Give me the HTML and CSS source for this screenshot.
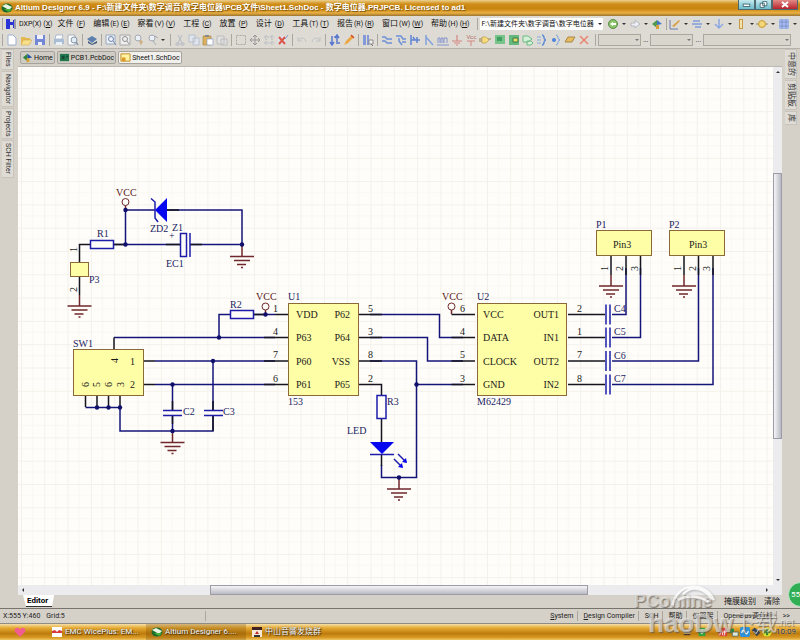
FILE: index.html
```
<!DOCTYPE html>
<html lang="en">
<head>
    <meta charset="UTF-8">
    <title>Altium Designer 6.9</title>
    <link rel="stylesheet" href="styles.css">
</head>
<body>
    <header class="titlebar">
        <svg class="icon" viewBox="0 0 12 12"><ellipse cx="6" cy="6" rx="5.5" ry="4.5" fill="#1d6b2c"/><path d="M1 4l7 4 3-3-6-3z" fill="#e8f3e0"/><path d="M3 7l5 3 3-3z" fill="#46b03c"/></svg>
        <h1>Altium Designer 6.9 - F:\新建文件夹\数字调音\数字电位器\PCB文件\Sheet1.SchDoc - 数字电位器.PRJPCB. Licensed to ad1</h1>
        <div class="win-buttons">
            <button class="win" aria-label="Minimize"><svg viewBox="0 0 18 9"><rect x="5" y="4" width="8" height="3" fill="#fff" stroke="#35606c"/></svg></button>
            <button class="win" aria-label="Restore"><svg viewBox="0 0 18 9"><path d="M8 1h5v5h-5zM5 3h5v5h-5z" fill="#fff" stroke="#35606c"/></svg></button>
            <button class="win close" aria-label="Close"><svg viewBox="0 0 24 9"><path d="M9 2l6 5M15 2l-6 5" stroke="#fff" stroke-width="2"/></svg></button>
        </div>
    </header>

    <nav class="menubar">
        <span class="grip"></span>
        <button class="menu dxp"><svg class="icon" viewBox="0 0 12 12"><path d="M1 1h4v3h3V2h3v8H8V7H5v4H1z" fill="#2a35d8"/><path d="M9 1h2v10H9z" fill="#9a9aa8"/></svg><span>DXP(X) (<u>X</u>)</span></button>
        <button class="menu">文件 <span>(<u>F</u>)</span></button>
        <button class="menu">编辑<span>(E) (<u>E</u>)</span></button>
        <button class="menu">察看<span>(V) (<u>V</u>)</span></button>
        <button class="menu">工程 <span>(<u>C</u>)</span></button>
        <button class="menu">放置 <span>(<u>P</u>)</span></button>
        <button class="menu">设计 <span>(<u>D</u>)</span></button>
        <button class="menu">工具<span>(T) (<u>T</u>)</span></button>
        <button class="menu">报告<span>(R) (<u>R</u>)</span></button>
        <button class="menu">窗口<span>(W) (<u>W</u>)</span></button>
        <button class="menu">帮助<span>(H) (<u>H</u>)</span></button>
        <div class="address">
            <span class="grip"></span>
            <span class="combo path"><select aria-label="Document path"><option>F:\新建文件夹\数字调音\数字电位器</option></select></span>
            <div class="nav-tools">
                <button class="drop" aria-label="Back"><svg class="icon" viewBox="0 0 12 12"><circle cx="6" cy="6" r="4.5" fill="#8cc56a" stroke="#5c8a4a"/><path d="M3 6l3-2v4zM6 5h3v2H6z" fill="#fff"/></svg></button>
                <button class="drop" aria-label="Forward"><svg class="icon" viewBox="0 0 12 12"><path d="M2 5h4V2l5 4-5 4V8H2z" fill="#eceef4" stroke="#b4b8c0"/></svg></button>
                <button aria-label="Home"><svg class="icon" viewBox="0 0 12 12"><path d="M1 6l5-4v8z" fill="#4f9a4c"/><path d="M11 6L6 2v5z" fill="#4274c4"/><path d="M5 7h3v4H5z" fill="#d8a23a"/></svg></button>
                <span class="grip"></span>
                <button class="drop" aria-label="Drawing tools"><svg class="icon" viewBox="0 0 12 12"><path d="M1 2v9h8" stroke="#6a7cae" fill="none"/><path d="M3 8l7-6 1 1-6 6z" fill="#d6a044"/></svg></button>
                <button class="drop" aria-label="Align"><svg class="icon" viewBox="0 0 12 12"><path d="M2 3h7M1 6h10M4 9h6" stroke="#7f9ddc" stroke-width="1.5"/></svg></button>
                <button class="drop" aria-label="Power"><svg class="icon" viewBox="0 0 12 12"><path d="M6 1v9M2 6l4 4 4-4" stroke="#8ba8e2" stroke-width="1.5" fill="none"/></svg></button>
                <button class="drop" aria-label="Digital"><svg class="icon" viewBox="0 0 12 12"><rect x="4.500" y="1.500" width="3" height="9" fill="#f4e3b0" stroke="#c49a45"/></svg></button>
                <button class="drop" aria-label="Sources"><svg class="icon" viewBox="0 0 12 12"><path d="M0 6h12" stroke="#9c8855"/><circle cx="6" cy="6" r="3.500" fill="#f5d675" stroke="#c49a35"/></svg></button>
                <button class="drop" aria-label="Grids"><svg class="icon" viewBox="0 0 12 12"><path d="M1 1h10v10H1z" fill="#a9bbea"/><path d="M1 4h10M1 8h10M4 1v10M8 1v10" stroke="#7c94d4"/></svg></button>
            </div>
        </div>
    </nav>

    <div class="toolbar">
        <div class="group first">
            <button aria-label="New"><svg class="icon" viewBox="0 0 12 12"><path d="M2 1h5l3 3v7H2z" fill="#fff" stroke="#9eafd0"/></svg></button>
            <button aria-label="Open"><svg class="icon" viewBox="0 0 12 12"><path d="M1 3h4l1 1h4v6H1z" fill="#e6b952"/><path d="M3 6h9l-3 5H1z" fill="#f8df8a" stroke="#c89f40" stroke-width=".5"/></svg></button>
            <button aria-label="Save"><svg class="icon" viewBox="0 0 12 12"><path d="M1 1h10v10H1z" fill="#7287d6"/><path d="M3 1h6v4H3zM4 8h4v3H4z" fill="#eef1fc"/></svg></button>
        </div>
        <div class="group">
            <button aria-label="Print"><svg class="icon" viewBox="0 0 12 12"><path d="M3 1h7L9 5H2z" fill="#fff" stroke="#8fa6c4" stroke-width=".7"/><path d="M1 5h10v5H1z" fill="#a9bdd4"/><path d="M3 8h6v3H3z" fill="#e9f0f7"/></svg></button>
            <button aria-label="Preview"><svg class="icon" viewBox="0 0 12 12"><path d="M1 1h7v10H1z" fill="#fff" stroke="#a8b0bc"/><circle cx="7" cy="6" r="3" fill="#e0ecf4" stroke="#8896a8"/><path d="M9 8l2 3" stroke="#8896a8" stroke-width="1.500"/></svg></button>
        </div>
        <div class="group">
            <button aria-label="Devices"><svg class="icon" viewBox="0 0 12 12"><path d="M1 5l5-3 5 3-5 4z" fill="#5c7fae"/><path d="M2 7l4 3 5-3v2l-5 2-4-2z" fill="#3a5578"/></svg></button>
        </div>
        <div class="group">
            <button aria-label="Fit document"><svg class="icon" viewBox="0 0 12 12"><path d="M1 1h9v9H1z" fill="#eef1f6" stroke="#98a8c0"/><circle cx="6" cy="5" r="2.500" fill="none" stroke="#7087ae"/><path d="M8 7l3 4" stroke="#7087ae"/></svg></button>
            <button aria-label="Fit area"><svg class="icon" viewBox="0 0 12 12"><path d="M1 1h10v10H1z" fill="#eee" stroke="#a8a8a8"/><circle cx="6" cy="5" r="2.500" fill="none" stroke="#909090"/><path d="M8 7l2 3" stroke="#909090"/></svg></button>
            <button aria-label="Zoom selected"><svg class="icon" viewBox="0 0 12 12"><circle cx="5" cy="4" r="3" fill="#eaf0f6" stroke="#a4a8b2"/><path d="M6 8h4M8 6v5" stroke="#c8a06a"/></svg></button>
            <button class="drop" aria-label="Zoom last"><svg class="icon" viewBox="0 0 12 12"><circle cx="5" cy="4" r="3" fill="#eaf0f6" stroke="#a4a8b2"/><path d="M6 7l3 4M8 2l3 2" stroke="#a4a8b2"/></svg></button>
        </div>
        <div class="group">
            <button disabled aria-label="Cut"><svg class="icon" viewBox="0 0 12 12"><path d="M4 1l4 8M8 1L4 9" stroke="#b6bac4"/><path d="M2 9h3v2H2zM7 9h3v2H7z" fill="none" stroke="#b6bac4"/></svg></button>
            <button disabled aria-label="Copy"><svg class="icon" viewBox="0 0 12 12"><path d="M1 1h6v7H1zM5 4h6v7H5z" fill="#e2e6ee" stroke="#b8c0cc"/></svg></button>
            <button aria-label="Paste"><svg class="icon" viewBox="0 0 12 12"><path d="M1 2h8v9H1z" fill="#ddb15a" stroke="#a08040" stroke-width=".6"/><path d="M3 1h4v2H3z" fill="#8a8a8a"/><path d="M5 5h6v6H5z" fill="#fff" stroke="#8fa2ca" stroke-width=".7"/></svg></button>
            <button disabled aria-label="Stamp"><svg class="icon" viewBox="0 0 12 12"><path d="M1 2h7v8H1zM5 5h6v6H5z" fill="#e1e1e1" stroke="#bcbcbc"/></svg></button>
        </div>
        <div class="group">
            <button aria-label="Select area"><svg class="icon" viewBox="0 0 12 12"><path d="M1.500 1.500h9v9h-9z" fill="none" stroke="#a8a8a8" stroke-dasharray="2 1"/></svg></button>
            <button aria-label="Move"><svg class="icon" viewBox="0 0 12 12"><path d="M6 1v10M1 6h10M4 3l2-2 2 2M4 9l2 2 2-2M3 4L1 6l2 2M9 4l2 2-2 2" stroke="#999" fill="none"/></svg></button>
            <button aria-label="Deselect"><svg class="icon" viewBox="0 0 12 12"><path d="M1 3h10M1 9h10M3 1v10M9 1v10" stroke="#b4b8c0" stroke-dasharray="2 1"/></svg></button>
            <button aria-label="Clear"><svg class="icon" viewBox="0 0 12 12"><path d="M1 2h8v8H1z" fill="#dfe2ea"/><path d="M2 3l6 7M8 3l-6 7" stroke="#db5548" stroke-width="2"/><path d="M8 5l3-4" stroke="#8897bd"/></svg></button>
        </div>
        <div class="group">
            <button disabled aria-label="Undo"><svg class="icon" viewBox="0 0 12 12"><path d="M2 3v4h4M2 7c2-4 7-4 8 1" fill="none" stroke="#c0c2c6"/></svg></button>
            <button disabled aria-label="Redo"><svg class="icon" viewBox="0 0 12 12"><path d="M10 3v4H6M10 7C8 3 3 3 2 8" fill="none" stroke="#c0c2c6"/></svg></button>
        </div>
        <div class="group">
            <button aria-label="Hierarchy"><svg class="icon" viewBox="0 0 12 12"><path d="M3 2v8M1 8l2 3 2-3M8 10V2M6 4l2-3 2 3M5 3h2M9 9h2" stroke="#5978cf" stroke-width="1.500" fill="none"/></svg></button>
            <button aria-label="Cross probe"><svg class="icon" viewBox="0 0 12 12"><path d="M1 11l2-4 6-6 2 2-6 6z" fill="#eea640"/><path d="M8 1l3 3" stroke="#d05030" stroke-width="1.500"/></svg></button>
        </div>
        <div class="group">
            <button aria-label="Browse library"><svg class="icon" viewBox="0 0 12 12"><path d="M1 1h3v10H1zM5 1h2v10H5z" fill="#8399d8"/><path d="M7 6h4v4H7z" fill="#f0f0f0" stroke="#8d8d8d"/><path d="M9 10l2 2" stroke="#777"/></svg></button>
        </div>
        <div class="group wiring">
            <button aria-label="Wire"><svg class="icon" viewBox="0 0 12 12"><path d="M1 3h3l2 2h5M1 7h3l2 2h5" stroke="#6d91d8" stroke-width="1.500" fill="none"/></svg></button>
            <button aria-label="Bus"><svg class="icon" viewBox="0 0 12 12"><path d="M1 2h5l2 3h3M4 4v3l3 4M7 8h4" stroke="#6d91d8" stroke-width="1.500" fill="none"/></svg></button>
            <button aria-label="Harness"><svg class="icon" viewBox="0 0 12 12"><path d="M2 1v10M2 6h9M4 3l2 3M8 3v6" stroke="#5f84d4" stroke-width="1.500" fill="none"/></svg></button>
            <button aria-label="Bus entry"><svg class="icon" viewBox="0 0 12 12"><path d="M3 1v10M3 3l7 8" stroke="#84a2dc" stroke-width="1.500"/></svg></button>
            <button aria-label="Net label"><svg class="icon" viewBox="0 0 12 12"><path d="M1 9V4h2v5M4 9V4h2v5M7 9V4h3v5M0 11h12" stroke="#8795cf" fill="none"/></svg></button>
            <button aria-label="GND"><svg class="icon" viewBox="0 0 12 12"><path d="M6 1v6M1 7h10M3 9h6M5 11h2" stroke="#d58580" stroke-width="1.200"/></svg></button>
            <button class="vcc" aria-label="VCC"><span>Vcc</span><svg viewBox="0 0 12 6"><path d="M2 1h8M6 1v5" stroke="#d58580"/></svg></button>
            <button aria-label="Part"><svg class="icon" viewBox="0 0 12 12"><path d="M0 5h12M0 7h3" stroke="#97834e"/><path d="M3 3h4l3 3-3 3H3z" fill="#f6dc7d" stroke="#bd994d" stroke-width=".7"/></svg></button>
            <button aria-label="Sheet symbol"><svg class="icon" viewBox="0 0 12 12"><path d="M1 1h10v9H1z" fill="#78c38a"/><path d="M3 3h5v4H3z" fill="#3f9e62"/></svg></button>
            <button aria-label="Sheet entry"><svg class="icon" viewBox="0 0 12 12"><path d="M1 1h10v10H1z" fill="#66b97c"/><path d="M5 4h5v4H5z" fill="#e9dd65" stroke="#39794a"/></svg></button>
            <button aria-label="Device sheet"><svg class="icon" viewBox="0 0 12 12"><path d="M1 2h5l4 3-4 3H1zM5 7h4l2 2-2 2H5z" fill="#d5f0da" stroke="#6dbb80"/></svg></button>
            <button aria-label="Harness connector"><svg class="icon" viewBox="0 0 12 12"><path d="M6 1c3 0 1 5 4 5-3 0-1 5-4 5" stroke="#628fd8" stroke-width="1.500" fill="none"/><path d="M1 3h4M1 6h4M1 9h4" stroke="#86aee2"/></svg></button>
            <button aria-label="Harness entry"><svg class="icon" viewBox="0 0 12 12"><path d="M6 1c3 0 1 5 4 5-3 0-1 5-4 5" stroke="#74a2dc" fill="none"/><circle cx="4" cy="6" r="2" fill="#4c83dc"/></svg></button>
            <button aria-label="Port"><svg class="icon" viewBox="0 0 12 12"><path d="M1 8l3-5h7l-3 5z" fill="#e8bc60" stroke="#a98848"/></svg></button>
            <button aria-label="No ERC"><svg class="icon" viewBox="0 0 12 12"><path d="M2 2l8 8M10 2l-8 8" stroke="#ec8070" stroke-width="1.500"/></svg></button>
        </div>
        <div class="group filters">
            <span class="combo"><select aria-label="Grid filter"></select></span>...
            <span class="combo"><select aria-label="Net filter"></select></span>...
            <span class="combo wide"><select aria-label="Mask filter"></select></span>
        </div>
    </div>

    <div class="workspace">
        <aside class="side left">
            <button>Files</button>
            <button>Navigator</button>
            <button>Projects</button>
            <button>SCH Filter</button>
        </aside>

        <div class="center">
            <div class="doc-tabs">
                <button><svg class="icon" viewBox="0 0 12 12"><path d="M1 6l5-4v8z" fill="#2d8338"/><path d="M11 6L6 2v5z" fill="#214fae"/><path d="M5 7h3v4H5z" fill="#d8a32a"/></svg>Home</button>
                <button><svg class="icon" viewBox="0 0 12 12"><path d="M1 2h10v8H1z" fill="#22784c"/><path d="M3 4h3v4H3zM8 4h2v2H8z" fill="#134a36"/></svg>PCB1.PcbDoc</button>
                <button class="active"><svg class="icon" viewBox="0 0 12 12"><path d="M1 2h10v8H1z" fill="#fff2a0" stroke="#bd8922"/><path d="M2 6h4v4H2z" fill="#db9a25"/></svg>Sheet1.SchDoc</button>
            </div>

            <div class="sheet">
                <svg class="schematic">
                    <defs>
                        <pattern id="grid" width="23.300" height="23.300" patternUnits="userSpaceOnUse" x="21" y="18">
                            <path d="M11.500 0v23.300M0 11.500h23.300" stroke="#f9f7f2" fill="none"/>
                            <path d="M.500 0v23.300M0 .500h23.300" stroke="#f3f1ea" fill="none"/>
                        </pattern>
                        <g id="gnd">
                            <path d="M0-11V0M-12 0h24M-8 4h16M-5 8h9M-1 11h2"/>
                        </g>
                        <g id="cap"><path d="M-2-10v20M2-10v20"/></g>
                    </defs>
                    <!-- sheet origin -->
                    <g transform="translate(-18 -67)">
                        <rect width="1600" height="1200" fill="url(#grid)"/>

                        <g class="wire">
                            <path d="M125.500 210V244.500M125.500 210H155M167 210H242V245M113 244.500H180M190 244.500H242"/>
                            <path d="M219 337.500V314.500H230M253 314.500H275M114 337.500H275M155 361H275M155 384.500H275"/>
                            <path d="M213 361V410M213 416V431H120V407.500H85.500M172.500 384.500V410M172.500 416V431"/>
                            <path d="M370 314.500H439.500V337.500H463M370 337.500H427.500V361H463M370 361H416.500V477.500H381.500V465M416.500 384.500H463"/>
                            <path d="M612 314.500H626V268M612 337.500H640.500V268M612 361H698.500V268M612 384.500H713V268"/>
                        </g>
                        <g class="pin">
                            <path d="M90 244.500H79.500V262M79.500 276V295M113 244.500H125M167 210H179M166 244.500H180M190 244.500H202"/>
                            <path d="M275 314.500H288M253 314.500H265M264 337.500H288M264 361H288M264 384.500H288M114 350V337.500M143.500 361H155M143.500 384.500H155"/>
                            <path d="M85.500 395.500V407M97 395.500V407M108.500 395.500V407M120 395.500V407M172.500 401V410M213 401V410M172.500 416V424M213 416V431"/>
                            <path d="M358 314.500H382M358 337.500H382M358 361H382M358 384.500H381.500V395M381.500 418V442M381.500 454V466"/>
                            <path d="M451.500 314.500H475M451.500 337.500H475M451.500 361H475M451.500 384.500H475"/>
                            <path d="M568 314.500H605M568 337.500H605M568 361H605M568 384.500H605"/>
                            <path d="M611 256V275M626 256V275M640.500 256V275M684 256V275M698.500 256V275M713 256V275"/>
                        </g>

                        <g class="part">
                            <rect x="90.500" y="240.500" width="23" height="8"/>
                            <rect x="180.500" y="233.500" width="6" height="23"/>
                            <path d="M190 233V257"/>
                            <rect x="230.500" y="310.500" width="23" height="8"/>
                            <rect x="377" y="395.500" width="9" height="23"/>
                            <path d="M163 410.500H182M163 415.500H182M204 410.500H223M204 415.500H223"/>
                            <path d="M151 198.500L155 202V218L158 222"/>
                            <path d="M370 454.500H394M398 454L406 462M394 459L402 467"/>
                            <use href="#cap" x="608" y="314.500"/>
                            <use href="#cap" x="608" y="337.500"/>
                            <use href="#cap" x="608" y="361"/>
                            <use href="#cap" x="608" y="384.500"/>
                        </g>
                        <g class="solid">
                            <path d="M155 210L167 198V222zM370 442H394L382 454zM407 463l-1-5-4 4zM403 468l-1-5-4 4z"/>
                        </g>

                        <g class="power">
                            <use href="#gnd" x="242" y="256.500"/>
                            <use href="#gnd" x="79.500" y="306"/>
                            <use href="#gnd" x="172.500" y="442.500"/>
                            <use href="#gnd" x="399" y="489"/>
                            <use href="#gnd" x="611" y="286"/>
                            <use href="#gnd" x="684" y="286"/>
                            <path d="M125.500 205V210M265.500 310V314M451.500 310V314"/>
                            <circle cx="125.500" cy="202" r="3.500"/>
                            <circle cx="265.500" cy="306.500" r="3.500"/>
                            <circle cx="451.500" cy="306.500" r="3.500"/>
                        </g>

                        <g class="body">
                            <rect x="70.500" y="262.500" width="18" height="14"/>
                            <rect x="73.500" y="349.500" width="70" height="46"/>
                            <rect x="288.500" y="303.500" width="70" height="92"/>
                            <rect x="477.500" y="303.500" width="89" height="92"/>
                            <rect x="596.500" y="230.500" width="55" height="25"/>
                            <rect x="669.500" y="230.500" width="55" height="25"/>
                        </g>

                        <g class="node">
                            <circle cx="125.500" cy="210" r="2.200"/><circle cx="125.500" cy="244.500" r="2.200"/>
                            <circle cx="242" cy="244.500" r="2.200"/><circle cx="265.500" cy="314.500" r="2.200"/>
                            <circle cx="219" cy="337.500" r="2.200"/><circle cx="213" cy="361" r="2.200"/>
                            <circle cx="172.500" cy="384.500" r="2.200"/><circle cx="172.500" cy="431" r="2.200"/>
                            <circle cx="97" cy="407.500" r="2.200"/><circle cx="108.500" cy="407.500" r="2.200"/>
                            <circle cx="120" cy="407.500" r="2.200"/><circle cx="416.500" cy="384.500" r="2.200"/>
                            <circle cx="399" cy="477.500" r="2.200"/>
                        </g>

                        <g class="label">
                            <text x="97" y="237">R1</text><text x="150" y="232">ZD2</text><text x="172" y="231">Z1</text>
                            <text x="169" y="239">+</text><text x="166" y="267">EC1</text><text x="89" y="283">P3</text>
                            <text x="230" y="308">R2</text><text x="288" y="300">U1</text><text x="288" y="405">153</text>
                            <text x="73" y="347">SW1</text><text x="183" y="415">C2</text><text x="223" y="415">C3</text>
                            <text x="387" y="405">R3</text><text x="347" y="434">LED</text>
                            <text x="477" y="300">U2</text><text x="477" y="405">M62429</text>
                            <text x="614" y="312">C4</text><text x="614" y="335">C5</text><text x="614" y="359">C6</text><text x="614" y="382">C7</text>
                            <text x="596" y="228">P1</text><text x="669" y="228">P2</text>
                        </g>
                        <g class="label vcc-label">
                            <text x="116" y="196">VCC</text><text x="256" y="300">VCC</text><text x="442" y="300">VCC</text>
                        </g>
                        <g class="pin-text">
                            <text x="296" y="318">VDD</text><text x="296" y="341">P63</text><text x="296" y="365">P60</text><text x="296" y="388">P61</text>
                            <text x="483" y="318">VCC</text><text x="483" y="341">DATA</text><text x="483" y="365">CLOCK</text><text x="483" y="388">GND</text>
                            <text x="273" y="312">1</text><text x="273" y="335">4</text><text x="273" y="358">7</text><text x="273" y="382">6</text>
                            <text x="368" y="312">5</text><text x="368" y="335">3</text><text x="368" y="358">8</text><text x="368" y="382">2</text>
                            <text x="460" y="312">6</text><text x="460" y="335">4</text><text x="460" y="358">5</text><text x="460" y="382">3</text>
                            <text x="577" y="312">2</text><text x="577" y="335">1</text><text x="577" y="358">7</text><text x="577" y="382">8</text>
                            <text x="130" y="365">1</text><text x="130" y="388">2</text>
                            <text x="613" y="248">Pin3</text><text x="689" y="248">Pin3</text>
                        </g>
                        <g class="pin-text end">
                            <text x="350" y="318">P62</text><text x="350" y="341">P64</text><text x="350" y="365">VSS</text><text x="350" y="388">P65</text>
                            <text x="559" y="318">OUT1</text><text x="559" y="341">IN1</text><text x="559" y="365">OUT2</text><text x="559" y="388">IN2</text>
                        </g>
                        <g class="pin-text">
                            <text transform="translate(77 252) rotate(-90)">1</text>
                            <text transform="translate(77 292) rotate(-90)">2</text>
                            <text transform="translate(118 363) rotate(-90)">4</text>
                            <text transform="translate(89 387) rotate(-90)">6</text>
                            <text transform="translate(100 387) rotate(-90)">5</text>
                            <text transform="translate(112 387) rotate(-90)">6</text>
                            <text transform="translate(124 387) rotate(-90)">3</text>
                            <text transform="translate(608 271) rotate(-90)">1</text>
                            <text transform="translate(623 271) rotate(-90)">2</text>
                            <text transform="translate(638 271) rotate(-90)">3</text>
                            <text transform="translate(681 271) rotate(-90)">1</text>
                            <text transform="translate(696 271) rotate(-90)">2</text>
                            <text transform="translate(710 271) rotate(-90)">3</text>
                        </g>
                    </g>
                </svg>
                <div class="vscroll">
                    <i class="arrow up"></i>
                    <span class="before"></span><span class="thumb"></span><span class="after"></span>
                    <i class="arrow down"></i>
                </div>
            </div>
            <div class="hscroll">
                <i class="arrow prev"></i>
                <span class="before"></span><span class="thumb"></span><span class="after"></span>
                <i class="arrow next"></i>
            </div>
            <div class="editor-bar">
                <button class="editor-tab">Editor</button>
                <button class="mask">掩膜级别</button>
                <button>清除</button>
            </div>
        </div>

        <aside class="side right">
            <button>中意的</button>
            <button>剪贴板</button>
            <button>库</button>
        </aside>
    </div>

    <footer class="status">
        <span class="coords">X:555 Y:460</span>
        <span class="snap">Grid:5</span>
        <span class="message"></span>
        <button><u>S</u>ystem</button>
        <button><u>D</u>esign Compiler</button>
        <button>SCH</button>
        <button>帮助</button>
        <button>仪器架</button>
        <button>OpenBus调色板</button>
        <button>&gt;&gt;</button>
    </footer>

    <div class="taskbar">
        <svg class="icon heart" viewBox="0 0 12 12"><path d="M6 11L1 6c-2-4 4-6 5-2 1-4 7-2 5 2z" fill="#f25d90"/></svg>
        <button><svg class="icon" viewBox="0 0 12 12"><path d="M1 1h10v10H1z" fill="#fff"/><path d="M1 5l3-1 2 2 2-2 3 1v2H1z" fill="#d8383c"/></svg>EMC WicePlus: EM...</button>
        <button class="active"><svg class="icon" viewBox="0 0 12 12"><ellipse cx="6" cy="6" rx="5.500" ry="4.500" fill="#1d6b2c"/><path d="M1 4l7 4 3-3-6-3z" fill="#e8f3e0"/><path d="M3 7l5 3 3-3z" fill="#46b03c"/></svg>Altium Designer 6....</button>
        <button><svg class="icon" viewBox="0 0 12 12"><path d="M1 1h10v10H1z" fill="#f6ead6"/><path d="M1 1h10v3H1z" fill="#402020"/><path d="M4 8l2-3 2 3z" fill="#c22828"/><path d="M3 9h6v2H3z" fill="#333"/></svg>中山音響发烧群</button>
        <div class="tray">
            <svg class="icon" viewBox="0 0 12 12"><path d="M2 3h8M2 6h8M2 9h8" stroke="#4b3a2b" stroke-width="2"/><path d="M2 4h8M2 7h8" stroke="#fff"/></svg>
            <svg class="icon shield" viewBox="0 0 12 12"><path d="M2 1h8v10H2z" fill="#35a33c"/><path d="M6 3v5M4 6l2 2 2-2" stroke="#fff" fill="none"/></svg>
            <svg class="icon" viewBox="0 0 12 12"><path d="M1 1h10v10H1z" fill="#d44437"/><path d="M2 10l2-7 2 7M8 4v6M6 6h4" stroke="#fff" fill="none"/></svg>
            <svg class="icon" viewBox="0 0 12 12"><path d="M1 2h5v5H1z" fill="#2c8a44"/><path d="M4 6h7v5H4z" fill="#dfe8df" stroke="#536753"/></svg>
            <svg class="icon" viewBox="0 0 12 12"><rect width="12" height="12" rx="2" fill="#2d92d8"/><path d="M2 7c1-4 3-4 4-1s3 3 4-1" stroke="#fff" stroke-width="1.500" fill="none"/></svg>
            <svg class="icon" viewBox="0 0 12 12"><path d="M1 4l3-3 4 2 3 4-4 4z" fill="#37424e"/><path d="M3 5l3 3 4-6" stroke="#eee" fill="none"/></svg>
            <svg class="icon" viewBox="0 0 12 12"><circle cx="6" cy="6" r="5.500" fill="#d6e52c"/><path d="M6 2v8M2 6h8" stroke="#27742d" stroke-width="2"/></svg>
            <time>10:09</time>
        </div>
    </div>

    <div class="ball">55</div>

    <div class="watermark">
        <svg viewBox="0 0 70 50"><path d="M10 30A25 25 0 0 1 58 24M22 17c12-12 26-6 34 6M16 24c10-6 24-6 36 2" fill="none" stroke="#fff" stroke-width="3"/></svg>
        <div class="brand">PConline</div>
        <div class="site"><b>haoDw</b><span>下载</span><small>.net</small></div>
    </div>
</body>
</html>
```
FILE: styles.css
```
* { box-sizing: border-box; }
body {
    margin: 0;
    height: 100vh;
    display: flex;
    flex-direction: column;
    overflow: hidden;
    position: relative;
    background: #d5d1c9;
    color: #222;
    font: 7px/10px Roboto, "Noto Sans CJK SC", sans-serif;
}
button {
    display: flex;
    align-items: center;
    padding: 0;
    border: 0;
    background: none;
    color: inherit;
    font: inherit;
    white-space: nowrap;
}
.icon { width: 12px; height: 12px; flex: none; display: block; }
.grip { width: 1px; height: 12px; background: #a9a69f; flex: none; }

/* title bar */
.titlebar {
    height: 16px;
    flex: none;
    display: flex;
    align-items: center;
    padding-left: 1px;
    gap: 2px;
    background: linear-gradient(#ecd08d, #cf8d17 25%, #c8850f 55%, #eab041 80%, #9a7431);
}
.titlebar h1 {
    flex: 1;
    margin: 0;
    color: #fff;
    font: bold 8px/14px "Liberation Sans", "Noto Sans CJK SC", sans-serif;
    white-space: nowrap;
    text-shadow: 1px 1px 1px #7a5410;
}
.win-buttons { display: flex; align-self: flex-start; padding-right: 2px; }
.win {
    width: 17px;
    height: 10px;
    border: 1px solid #4e6a70;
    border-top: 0;
    background: linear-gradient(#c5e9ee, #6fbccb);
}
.win svg { width: 100%; height: 9px; }
.win.close { width: 26px; background: linear-gradient(#e28a86, #b8232b); }

/* menus */
.menubar {
    height: 16px;
    flex: none;
    display: flex;
    align-items: center;
    padding-left: 2px;
    gap: 8px;
    background: #dedbd5;
    color: #111;
    font-size: 8px;
}
.menubar .grip { margin-right: -6px; }
.menu span { font-size: 7px; margin-left: 1px; white-space: pre; }
.menu { white-space: pre; }
.menu.dxp { margin-right: -3px; }
.menu.dxp span { margin-left: 2px; }
.address { display: flex; align-items: center; flex: 1; gap: 2px; }
.address .grip { margin-right: 0; }
.combo { position: relative; display: flex; width: 43px; height: 12px; }
.combo select {
    width: 100%;
    padding: 0 8px 0 1px;
    border: 1px solid #aaa79f;
    border-radius: 0;
    background: #d9d6ce;
    appearance: none;
    font: inherit;
    color: #111;
}
.combo::after, .drop::after {
    content: "";
    border: 2px solid transparent;
    border-top-color: #333;
    border-bottom: 0;
}
.combo::after { position: absolute; right: 2px; top: 5px; border-top-color: #777; }
.combo.path { width: 123px; font-size: 7px; }
.combo.path select { padding: 0; background: #fff; border-color: #fff; }
.combo.path::after { right: 1px; border-top-color: #222; }
.nav-tools { flex: 1; display: flex; justify-content: space-between; padding: 0 3px 0 2px; }
.nav-tools .drop { gap: 3px; }

/* tool buttons */
.toolbar {
    height: 17px;
    flex: none;
    display: flex;
    align-items: center;
    padding-left: 2px;
    background: #dedbd5;
    border-bottom: 1px solid #b5b2ab;
}
.group {
    display: flex;
    align-items: center;
    gap: 2px;
    height: 12px;
    margin-left: 3px;
    padding-left: 3px;
    border-left: 1px solid #a9a69f;
}
.group.first { margin-left: 0; }
.group .drop { gap: 2px; margin-right: 2px; }
.wiring { flex: 1; justify-content: space-between; gap: 0; margin-right: 2px; }
.vcc { flex-direction: column; width: 12px; height: 12px; color: #b36b65; font-size: 6px; line-height: 6px; }
.vcc svg { width: 12px; height: 6px; }
.filters { flex: none; gap: 2px; padding-left: 2px; margin-right: 9px; }
.combo.wide { width: 88px; }

/* work area */
.workspace { flex: 1; min-height: 0; display: flex; }
.side {
    width: 18px;
    flex: none;
    display: flex;
    flex-direction: column;
    align-items: flex-start;
    gap: 1px;
    padding: 0 2px;
}
.side button {
    writing-mode: vertical-rl;
    text-orientation: sideways;
    width: 12px;
    padding: 2px 0;
    justify-content: center;
    background: #dfdcd6;
    border: 1px solid #c8c4bc;
    border-left: 0;
    color: #333;
}
.side.right { padding-left: 3px; font-size: 8px; }
.center { flex: 1; min-width: 0; display: flex; flex-direction: column; }
.doc-tabs { flex: none; display: flex; gap: 2px; padding: 2px 2px 2px; border-bottom: 1px solid #bbb8b1; }
.doc-tabs button {
    height: 13px;
    gap: 1px;
    padding: 0 1px;
    border: 1px solid #a6a39c;
    border-radius: 2px;
    background: #cfccc5;
    color: #111;
}
.doc-tabs .icon { width: 11px; height: 11px; }
.doc-tabs .active { background: #f2f0ec; }

.sheet { flex: 1; min-height: 0; display: flex; background: #fefdf9; }
.schematic { flex: 1; min-width: 0; height: 100%; display: block; }
.schematic text { font: 10px "Liberation Serif", serif; }
.wire { fill: none; stroke: #14147a; stroke-width: 1.5px; }
.pin { fill: none; stroke: #15151f; stroke-width: 1.5px; }
.part { fill: none; stroke: #1d1daa; stroke-width: 1.5px; }
.part rect { fill: #fefdf9; }
.solid { fill: #0707ef; }
.power { fill: none; stroke: #70282c; stroke-width: 1.5px; }
.power circle { fill: #fefdf9; stroke-width: 1px; }
.body { fill: #fefea6; stroke: #8a6a38; }
.node { fill: #10106c; }
.label { fill: #1c1c62; }
.vcc-label { fill: #5b2020; }
.pin-text { fill: #1a1a1a; }
.end { text-anchor: end; }

/* scroll bars */
.vscroll, .hscroll { display: flex; background: #ecebee; }
.vscroll { width: 9px; flex: none; flex-direction: column; align-items: center; padding: 4px 0; }
.hscroll { height: 10px; flex: none; align-items: center; padding: 0 14px 0 4px; }
.thumb { border: 1px solid #9c9ca6; }
.vscroll .thumb { width: 9px; flex: 263; background: linear-gradient(90deg, #f5f5f8, #b9bac4); }
.hscroll .thumb { height: 10px; flex: 375; background: linear-gradient(#f5f5f8, #b9bac4); }
.vscroll .before { flex: 99; }
.vscroll .after { flex: 139; }
.hscroll .before { flex: 186; }
.hscroll .after { flex: 178; }
.arrow { border: 2px solid transparent; }
.up { border-bottom-color: #333; border-top: 0; }
.down { border-top-color: #333; border-bottom: 0; }
.prev { border-right-color: #333; border-left: 0; }
.next { border-left-color: #333; border-right: 0; }

.editor-bar { height: 13px; flex: none; display: flex; gap: 8px; padding: 0 2px 0 5px; font-size: 8px; }
.editor-tab {
    height: 12px;
    padding: 0 6px 0 4px;
    background: #fff;
    border-bottom: 1px solid #333;
    clip-path: polygon(0 0, 100% 0, 29px 100%, 3px 100%);
    color: #000;
    font-weight: bold;
}
.mask { margin-left: auto; }

/* status line */
.status {
    height: 16px;
    flex: none;
    display: flex;
    align-items: center;
    gap: 6px;
    padding: 0 10px 0 3px;
    border-top: 1px solid #77746e;
    border-bottom: 1px solid #8f8c85;
}
.status button { height: 10px; padding-right: 3px; border-right: 1px solid #a9a69f; }
.status button:last-child { border: 0; padding: 0; }
.snap { flex: 154; }
.message { flex: 340; height: 10px; border-left: 1px solid #a9a69f; }

/* task bar */
.taskbar {
    height: 16px;
    flex: none;
    display: flex;
    align-items: center;
    padding-left: 14px;
    background: linear-gradient(#f5dfa8, #e5a932 25%, #bd7b0c 60%, #d99a26 85%, #f0c868);
    color: #fff;
    font-size: 8px;
    text-shadow: 1px 1px 1px #3e2a08, 0 0 1px #3e2a08;
}
.heart { margin-right: 20px; }
.taskbar button { width: 100px; height: 16px; padding-left: 5px; gap: 2px; text-shadow: inherit; }
.taskbar button.active { background: rgba(110, 65, 0, .25); }
.tray { margin-left: auto; display: flex; align-items: center; gap: 1px; padding-right: 4px; }
.tray .icon { width: 10px; height: 10px; }
.tray .shield { margin: 0 10px 0 4px; }
.tray time { margin-left: 3px; color: #222; text-shadow: 0 0 1px #fff; }

/* floating ball on the right edge */
.ball {
    position: absolute;
    right: -13px;
    bottom: 33px;
    width: 25px;
    height: 25px;
    border-radius: 50%;
    background: #2fae54;
    border: 1px solid #bfe5c8;
    color: #fff;
    font-size: 8px;
    line-height: 23px;
    padding-left: 2px;
}

.watermark {
    position: absolute;
    right: 6px;
    bottom: 3px;
    width: 160px;
    height: 58px;
    color: rgba(240, 238, 234, .6);
    font-family: "Liberation Sans", "Noto Sans CJK SC", sans-serif;
    text-shadow: 1px 1px 1px rgba(90, 86, 80, .7);
    white-space: nowrap;
    pointer-events: none;
}
.watermark svg { position: absolute; left: 30px; top: 0; width: 60px; height: 44px; opacity: .7; filter: drop-shadow(1px 1px 1px #999); }
.brand { font-size: 18px; line-height: 18px; font-weight: bold; padding-top: 13px; }
.site { display: flex; align-items: center; padding-left: 14px; line-height: 26px; }
.site b { font-size: 26px; }
.site span { font-size: 22px; }
.site small { font-size: 10px; }
```
